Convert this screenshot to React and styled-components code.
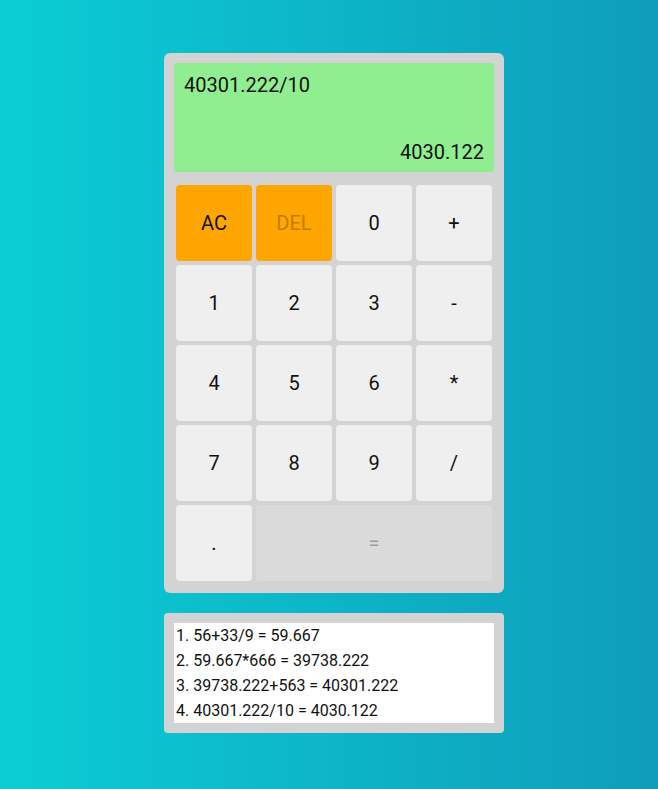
import React from 'react'
import styled, { createGlobalStyle } from 'styled-components'

const GlobalStyle = createGlobalStyle`
    html, body {
        margin: 0;
        padding: 0;
    }
    body {
        min-height: 789px;
        background: linear-gradient(90deg, #0bcdd4 0%, #0e9dbb 100%);
        font-family: Roboto, 'Liberation Sans', sans-serif;
    }
`

const Page = styled.div`
    display: flex;
    flex-direction: column;
    align-items: flex-start;
    row-gap: 20px;
    padding: 53px 0 0 164px;
`

const Calculator = styled.div`
    width: 320px;
    padding: 10px;
    background: #d3d3d3;
    border-radius: 6px;
`

const Display = styled.div`
    height: 109px;
    background: #90ee90;
    border-radius: 3px;
    box-sizing: border-box;
    padding: 10px 10px 8px 10px;
    display: flex;
    flex-direction: column;
    justify-content: space-between;
    color: #111;
    font-size: 20px;
    line-height: 24px;
`

const Result = styled.div`
    text-align: right;
`

const Keys = styled.div`
    display: grid;
    grid-template-columns: repeat(4, 80px);
    grid-auto-rows: 80px;
    margin-top: 11px;
`

const Key = styled.button`
    margin: 2px;
    border: none;
    border-radius: 4px;
    font-family: Roboto, 'Liberation Sans', sans-serif;
    font-size: 20px;
    grid-column: span ${p => p.$span || 1};
    background: ${p => p.$variant === 'action' ? '#ffa500' : p.$variant === 'equals' ? '#dadada' : '#efefef'};
    color: ${p => p.$muted ? (p.$variant === 'action' ? '#c07d00' : '#9a9a9a') : '#111'};
    padding: 0;
`

const History = styled.div`
    width: 320px;
    padding: 10px;
    background: #d3d3d3;
    border-radius: 4px;
`

const HistoryList = styled.div`
    background: #ffffff;
    padding: 0 2px;
    font-size: 16px;
    line-height: 25px;
    color: #111;
`

const keys = [
    { label: 'AC', variant: 'action' },
    { label: 'DEL', variant: 'action', muted: true },
    { label: '0' },
    { label: '+' },
    { label: '1' },
    { label: '2' },
    { label: '3' },
    { label: '-' },
    { label: '4' },
    { label: '5' },
    { label: '6' },
    { label: '*' },
    { label: '7' },
    { label: '8' },
    { label: '9' },
    { label: '/' },
    { label: '.' },
    { label: '=', variant: 'equals', muted: true, span: 3 },
]

const history = [
    '56+33/9 = 59.667',
    '59.667*666 = 39738.222',
    '39738.222+563 = 40301.222',
    '40301.222/10 = 4030.122',
]

const App = () => {
    return (
        <>
            <GlobalStyle />
            <Page>
                <Calculator>
                    <Display>
                        <div>40301.222/10</div>
                        <Result>4030.122</Result>
                    </Display>
                    <Keys>
                        {keys.map(k => (
                            <Key key={k.label} $variant={k.variant} $muted={k.muted} $span={k.span}>
                                {k.label}
                            </Key>
                        ))}
                    </Keys>
                </Calculator>
                <History>
                    <HistoryList>
                        {history.map((h, i) => (
                            <div key={i}>{i + 1}. {h}</div>
                        ))}
                    </HistoryList>
                </History>
            </Page>
        </>
    )
}

export default App
